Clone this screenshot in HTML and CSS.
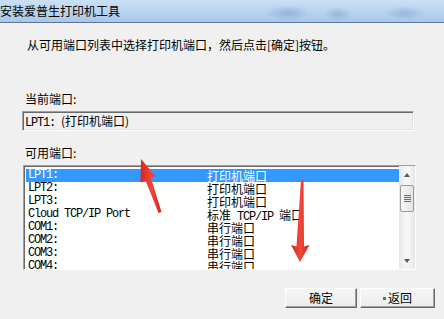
FILE: index.html
```html
<!DOCTYPE html>
<html>
<head>
    <meta charset="utf-8">
    <title>安装爱普生打印机工具</title>
    <link rel="stylesheet" href="styles.css">
</head>
<body>
<div class="window">
    <div class="titlebar">安装爱普生打印机工具</div>

    <div class="content">
        <p class="prompt">从可用端口列表中选择打印机端口，然后点击[确定]按钮。</p>

        <div class="label">当前端口:</div>
        <div class="field mono">LPT1: <span class="cjk">(打印机端口)</span></div>

        <div class="label label-list">可用端口:</div>
        <div class="listbox">
            <div class="rows mono">
                <div class="row selected"><span>LPT1:</span><span class="cjk">打印机端口</span></div>
                <div class="row"><span>LPT2:</span><span class="cjk">打印机端口</span></div>
                <div class="row"><span>LPT3:</span><span class="cjk">打印机端口</span></div>
                <div class="row"><span>Cloud TCP/IP Port</span><span><span class="cjk">标准</span> TCP/IP <span class="cjk">端口</span></span></div>
                <div class="row"><span>COM1:</span><span class="cjk">串行端口</span></div>
                <div class="row"><span>COM2:</span><span class="cjk">串行端口</span></div>
                <div class="row"><span>COM3:</span><span class="cjk">串行端口</span></div>
                <div class="row"><span>COM4:</span><span class="cjk">串行端口</span></div>
            </div>
            <div class="scrollbar">
                <div class="sb-btn"><i class="tri tri-up"></i></div>
                <div class="sb-thumb"><i class="grip"></i></div>
                <div class="sb-track"></div>
                <div class="sb-btn"><i class="tri tri-down"></i></div>
            </div>
        </div>
    </div>

    <div class="buttons">
        <button class="btn btn-ok">确定</button>
        <button class="btn btn-back"><i class="dot"></i>返回</button>
    </div>

    <!-- annotation arrows drawn over the dialog -->
    <svg class="arrows" width="444" height="319" viewBox="0 0 444 319">
        <defs>
            <linearGradient id="red" x1="0" y1="0" x2="1" y2="0">
                <stop offset="0" stop-color="#d8231c"/>
                <stop offset="0.5" stop-color="#f0473c"/>
                <stop offset="1" stop-color="#d8231c"/>
            </linearGradient>
        </defs>
        <polygon fill="url(#red)" points="141,159 155.5,176 151,178 161.5,212 158.5,213 145.5,180.5 140.5,182.5"/>
        <polygon fill="url(#red)" points="300,262 309.5,245 304,246.5 303.5,180 301,180 296.5,246.5 291,245"/>
    </svg>
</div>
</body>
</html>
```

FILE: styles.css
```css
html, body {
    margin: 0;
    padding: 0;
}

body {
    background-color: #f0f0f0;
    font-family: "Noto Sans CJK SC", "Noto Sans", sans-serif;
    font-size: 12px;
    color: #000;
}

.window {
    position: relative;
    width: 444px;
    height: 319px;
    overflow: hidden;
}

.titlebar {
    height: 22px;
    line-height: 21px;
    border-bottom: 1px solid #5f7795;
    white-space: nowrap;
    background:
        radial-gradient(ellipse 22px 8px at 288px 13px, rgba(80, 125, 180, 0.35), transparent),
        radial-gradient(ellipse 14px 7px at 338px 14px, rgba(80, 125, 180, 0.3), transparent),
        radial-gradient(ellipse 20px 7px at 405px 13px, rgba(80, 125, 180, 0.3), transparent),
        linear-gradient(#cae0f4, #a8c8e8);
}

.content {
    padding: 0 28px 0 22px;
}

.prompt {
    margin: 15px 0 0 5px;
    line-height: 14px;
    white-space: nowrap;
}

.label {
    margin-top: 40px;
    padding-left: 3px;
    line-height: 14px;
}

.label-list {
    margin-top: 15px;
}

/* latin text in the list is a 6px-wide bitmap font */
.mono {
    font-family: "Liberation Mono", "DejaVu Sans Mono", monospace;
    font-size: 12px;
    letter-spacing: -1.2px;
}

.cjk {
    font-family: "Noto Sans CJK SC", sans-serif;
    font-size: 12px;
    letter-spacing: 0;
}

.field {
    margin-top: 5px;
    width: 392px;
    height: 20px;
    box-sizing: border-box;
    padding-left: 2px;
    line-height: 18px;
    border: 1px solid;
    border-color: #a0a0a0 #ffffff #ffffff #a0a0a0;
    box-shadow: inset 1px 1px #696969, inset -1px -1px #e3e3e3;
    white-space: nowrap;
}

.listbox {
    margin: 5px 0 0 1px;
    width: 393px;
    height: 105px;
    box-sizing: border-box;
    display: flex;
    background-color: #fff;
    border: 1px solid;
    border-color: #a0a0a0 #ffffff #ffffff #a0a0a0;
    box-shadow: inset 1px 1px #696969;
    overflow: hidden;
}

.rows {
    flex: 1;
    padding: 3px 0 0 2px;
}

.row {
    display: grid;
    grid-template-columns: 179px 1fr;
    height: 13px;
    line-height: 13px;
    padding-left: 2px;
    white-space: nowrap;
}

.row.selected {
    background-color: #3399ff;
    color: #fff;
}

.scrollbar {
    width: 16px;
    display: flex;
    flex-direction: column;
    background: linear-gradient(to right, #e6e6e6, #f5f5f5 40%, #f5f5f5 60%, #e6e6e6);
}

.sb-btn {
    height: 17px;
    display: flex;
    align-items: center;
    justify-content: center;
}

.tri {
    width: 0;
    height: 0;
    border-left: 3px solid transparent;
    border-right: 3px solid transparent;
}

.tri-up {
    border-bottom: 4px solid #5a5a5a;
}

.tri-down {
    border-top: 4px solid #5a5a5a;
}

.sb-thumb {
    margin: 2px 1px 0;
    height: 27px;
    box-sizing: border-box;
    border: 1px solid #9a9a9a;
    border-radius: 2px;
    background: linear-gradient(to right, #f6f6f6, #e4e4e4);
    display: flex;
    align-items: center;
    justify-content: center;
}

.grip {
    width: 7px;
    height: 7px;
    background: repeating-linear-gradient(#6a6a6a 0 1px, transparent 1px 2px);
}

.sb-track {
    flex: 1;
}

.buttons {
    display: flex;
    justify-content: flex-end;
    gap: 3px;
    margin-top: 18px;
    padding-right: 9px;
}

.btn {
    height: 20px;
    padding: 0;
    font-family: "Noto Sans CJK SC", sans-serif;
    font-size: 12px;
    line-height: 18px;
    color: #000;
    background: linear-gradient(#f6f6f6, #ececec);
    border: 1px solid;
    border-color: #ffffff #696969 #696969 #ffffff;
    box-shadow: inset -1px -1px #a0a0a0;
    display: flex;
    align-items: center;
    justify-content: center;
}

.btn-ok {
    width: 72px;
}

.btn-back {
    width: 75px;
}

.dot {
    width: 3px;
    height: 3px;
    margin-right: 2px;
    background-color: #22a022;
}

.arrows {
    position: absolute;
    left: 0;
    top: 0;
    pointer-events: none;
}
```
